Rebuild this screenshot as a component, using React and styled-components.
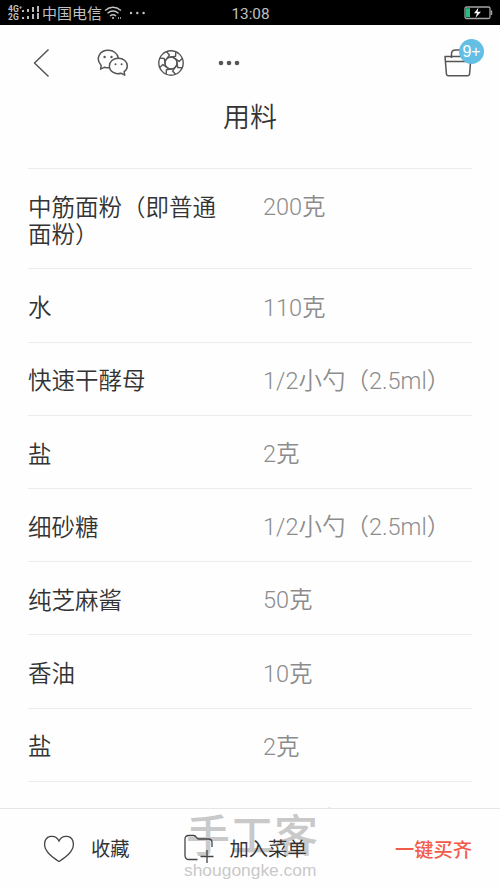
import React from "react";
import styled, { createGlobalStyle } from "styled-components";

const ingredients = [
  { name: "中筋面粉（即普通面粉）", amount: "200克" },
  { name: "水", amount: "110克" },
  { name: "快速干酵母", amount: "1/2小勺（2.5ml）" },
  { name: "盐", amount: "2克" },
  { name: "细砂糖", amount: "1/2小勺（2.5ml）" },
  { name: "纯芝麻酱", amount: "50克" },
  { name: "香油", amount: "10克" },
  { name: "盐", amount: "2克" },
  { name: "花椒粉", amount: "1/2小勺（2.5ml）" },
];

const blades = [0, 45, 90, 135, 180, 225, 270, 315];

export default function App() {
  return (
    <Screen>
      <GlobalStyle />
      <StatusBar>
        <div className="left">
          <div className="network">
            <span>4G⁺</span>
            <span>2G</span>
          </div>
          <svg width="17" height="14" viewBox="0 0 17 14" fill="#b8b8b8">
            <path d="M0 4h2v2H0zM5 3h2v3H5zM10 1h2v5h-2zM15 0h2v6h-2zM0 11h2v2H0zM5 10h2v3H5zM10 8h2v5h-2zM15 7h2v6h-2z" />
          </svg>
          <span className="carrier">中国电信</span>
          <svg width="18" height="14" viewBox="0 0 18 14" fill="none" stroke="#c4c4c4" strokeWidth="1.4">
            <path d="M1 4.5Q9-2 17 4.5M3.5 7.3Q9 2.8 14.5 7.3M6 10Q9 7.5 12 10" />
            <circle cx="9" cy="12" r="1" fill="#c4c4c4" stroke="none" />
            <path d="M14 12h3" strokeDasharray="1 1" />
          </svg>
          <svg className="more" width="17" height="4" viewBox="0 0 17 4" fill="#c4c4c4">
            <circle cx="2" cy="2" r="1.2" />
            <circle cx="8.3" cy="2" r="1.2" />
            <circle cx="14.6" cy="2" r="1.2" />
          </svg>
        </div>
        <time>13:08</time>
        <svg className="battery" width="29" height="14" viewBox="0 0 29 14">
          <rect x="1" y="1" width="25" height="11.5" rx="1.5" fill="none" stroke="#a5a5a5" strokeWidth="1.3" />
          <path d="M26.7 4.5h1.5v4.5h-1.5z" fill="#a5a5a5" />
          <path d="M2 2.2h4v9H2z" fill="#25bd83" />
          <path d="M14.5 1.5 10 7.3h3l-1.5 4.5L17 5.8h-3.5z" fill="#fff" />
        </svg>
      </StatusBar>
      <Toolbar>
        <svg className="back" width="18" height="30" viewBox="0 0 18 30">
          <path d="M16.5 1.5 2.5 15l14 13.5" />
        </svg>
        <svg className="wechat" width="32" height="28" viewBox="0 0 32 28">
          <path d="M12.2 18.7c-1.7.3-3.2.1-4.6-.5l-4 2 .6-3.8C-2 9.8 2.6 1.3 11.3 1.3c5.3 0 9.3 3.2 10 7.8" />
          <path d="M21.4 9.3c-5.3 0-9 3.4-9 7.7 0 5.2 5.4 9 11.5 7.2l3.8 2-.6-3.5c2-1.5 3.2-3.4 3.2-5.7 0-4.3-3.8-7.7-8.9-7.7z" />
          <g className="dots">
            <circle cx="7.6" cy="8" r="1.2" />
            <circle cx="14.5" cy="8" r="1.2" />
            <circle cx="18.5" cy="15.2" r="1" />
            <circle cx="24.6" cy="15.2" r="1" />
          </g>
        </svg>
        <svg className="shutter" width="28" height="28" viewBox="-14 -14 28 28">
          <circle r="12.2" />
          <circle r="6" />
          {blades.map((angle) => (
            <path key={angle} d="M-2.3-5.6 4.6-6.8 4.8-11.2" transform={`rotate(${angle})`} />
          ))}
        </svg>
        <svg className="more" width="22" height="6" viewBox="0 0 22 6">
          <g className="dots">
            <circle cx="3" cy="3" r="2.3" />
            <circle cx="11" cy="3" r="2.3" />
            <circle cx="19" cy="3" r="2.3" />
          </g>
        </svg>
        <Basket>
          <svg width="28" height="30" viewBox="0 0 28 30">
            <path d="M1 8.5h26l-1.4 17.2q-.2 2-2 2H4.4q-1.8 0-2-2zM1.5 13.5h25M7.5 10V6q0-4 4-4h5q4 0 4 4v4" />
          </svg>
          <Badge>9+</Badge>
        </Basket>
      </Toolbar>
      <Content>
        <h1>用料</h1>
        <ul>
          {ingredients.map((item, index) => (
            <Ingredient key={index}>
              <span className="name">{item.name}</span>
              <span className="amount">{item.amount}</span>
            </Ingredient>
          ))}
        </ul>
      </Content>
      <BottomBar>
        <Watermark>
          <strong>手工客</strong>
          <span>shougongke.com</span>
        </Watermark>
        <Action>
          <svg width="32" height="28" viewBox="0 0 32 28">
            <path d="M16 6C12.5-1 2-.2 1.6 9 1.4 17 10 22.5 16 26.5 22 22.5 30.6 17 30.4 9 30-.2 19.5-1 16 6z" />
          </svg>
          <span>收藏</span>
        </Action>
        <Action $left={54}>
          <svg width="30" height="30" viewBox="0 0 30 30">
            <path d="M13.5 25.5H5q-4 0-4-4V5q0-3.5 3.5-3.5h5q2 0 3 2 .8 1.5 2.5 1.5h9.5q3.5 0 3.5 3.5V13M23 16v13M16.5 22.5h13" />
          </svg>
          <span>加入菜单</span>
        </Action>
        <BuyAll>一键买齐</BuyAll>
      </BottomBar>
    </Screen>
  );
}

const GlobalStyle = createGlobalStyle`
  * {
    box-sizing: border-box;
    margin: 0;
    padding: 0;
  }
  body {
    background: #fefefe;
    font-family: "Liberation Sans", "Noto Sans CJK SC", sans-serif;
  }
  svg {
    display: block;
    flex: none;
  }
`;

const Screen = styled.div`
  display: flex;
  flex-direction: column;
  width: 500px;
  height: 889px;
  overflow: hidden;
  background: #fefefe;
`;

const StatusBar = styled.header`
  display: grid;
  grid-template-columns: 1fr auto 1fr;
  align-items: center;
  height: 25px;
  flex: none;
  padding: 0 7px 0 8px;
  background: #000;
  color: #c0c0c0;
  .left {
    display: flex;
    align-items: center;
  }
  .network {
    display: flex;
    flex-direction: column;
    width: 14px;
    font-family: Roboto, sans-serif;
    font-size: 8.5px;
    font-weight: 700;
    line-height: 8px;
    white-space: nowrap;
  }
  .carrier {
    margin: 2px 2px 0 3px;
    font-size: 15px;
    line-height: 22px;
    white-space: nowrap;
  }
  .more {
    margin-left: 7px;
  }
  time {
    padding-top: 3px;
    font-family: Roboto, sans-serif;
    font-size: 15.3px;
    line-height: 22px;
  }
  .battery {
    justify-self: end;
  }
`;

const Toolbar = styled.nav`
  display: flex;
  align-items: center;
  height: 76px;
  flex: none;
  padding: 0 28px 0 32px;
  svg {
    fill: none;
    stroke: #555;
    stroke-width: 1.5;
    stroke-linejoin: round;
  }
  .dots {
    fill: #555;
    stroke: none;
  }
  .wechat {
    margin-left: 47px;
  }
  .shutter {
    margin-left: 28px;
    stroke-width: 1.4;
  }
  .more {
    margin-left: 33px;
  }
`;

const Basket = styled.div`
  position: relative;
  margin-left: auto;
`;

const Badge = styled.span`
  position: absolute;
  top: -9px;
  left: 15px;
  width: 25px;
  height: 25px;
  border-radius: 50%;
  background: #63bfe4;
  color: white;
  font-family: "Liberation Sans", sans-serif;
  font-size: 16px;
  line-height: 26px;
  text-align: center;
`;

const Content = styled.main`
  flex: 1;
  min-height: 0;
  overflow: hidden;
  padding: 0 28px;
  h1 {
    height: 67px;
    padding-top: 2px;
    color: #333;
    font-size: 27px;
    font-weight: 350;
    line-height: 31px;
    text-align: center;
  }
  ul {
    list-style: none;
  }
`;

const Ingredient = styled.li`
  display: grid;
  grid-template-columns: 200px 1fr;
  column-gap: 35px;
  padding: 25.8px 0 19.2px;
  border-top: 1px solid #ececec;
  color: #333;
  font-size: 23.5px;
  font-weight: 350;
  line-height: 27.2px;
  .amount {
    margin-top: -0.6px;
    color: #8c8c8c;
    font-family: Roboto, "Noto Sans CJK SC", sans-serif;
    white-space: nowrap;
  }
`;

const BottomBar = styled.footer`
  position: relative;
  display: flex;
  align-items: center;
  height: 81px;
  flex: none;
  padding: 0 28px 0 43px;
  border-top: 1px solid #e6e6e6;
  background: #fefefe;
`;

const Action = styled.div`
  position: relative;
  display: flex;
  align-items: center;
  gap: 16px;
  margin-left: ${({ $left }) => $left || 0}px;
  color: #333;
  font-size: 19.3px;
  line-height: 28px;
  svg {
    fill: none;
    stroke: #444;
    stroke-width: 1.3;
  }
  span {
    padding-top: 2px;
  }
`;

const BuyAll = styled.button`
  margin-left: auto;
  border: none;
  background: none;
  color: #f35b49;
  font: inherit;
  font-size: 19.3px;
  font-weight: 500;
`;

/* sits underneath the bar's labels */
const Watermark = styled.div`
  position: absolute;
  top: 3px;
  left: 184px;
  display: flex;
  flex-direction: column;
  color: #c9c9c9;
  white-space: nowrap;
  strong {
    margin-left: 2px;
    font-size: 44px;
    font-weight: 500;
    line-height: 50px;
  }
  span {
    font-size: 17.4px;
    line-height: 17px;
  }
`;
